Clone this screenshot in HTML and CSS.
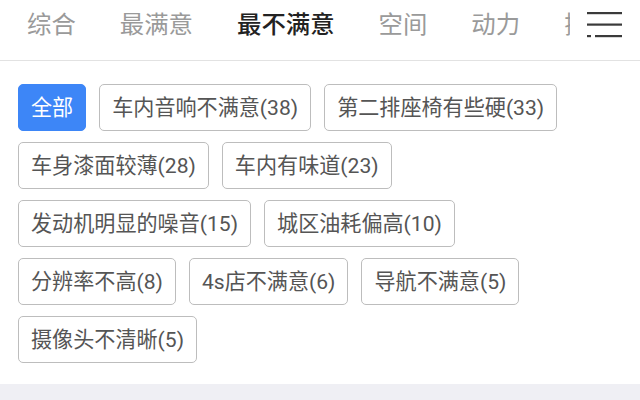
FILE: index.html
```html
<!DOCTYPE html>
<html lang="zh-CN">
<head>
    <meta charset="UTF-8">
    <meta name="viewport" content="width=device-width, initial-scale=1.0">
    <title>口碑标签</title>
    <link rel="stylesheet" href="styles.css">
</head>
<body>

    <div class="tabbar">
        <div class="tabs">
            <span class="tab">综合</span>
            <span class="tab">最满意</span>
            <span class="tab active">最不满意</span>
            <span class="tab">空间</span>
            <span class="tab">动力</span>
            <span class="tab">操控</span>
        </div>
        <div class="menu">
            <svg width="36" height="30" viewBox="0 0 36 30">
                <rect x="0" y="0" width="35" height="2.2" fill="#3a3a3a"/>
                <rect x="0" y="11.5" width="35" height="2.2" fill="#3a3a3a"/>
                <rect x="0" y="23" width="4" height="2.2" fill="#3a3a3a"/>
                <rect x="8" y="23" width="27" height="2.2" fill="#3a3a3a"/>
            </svg>
        </div>
    </div>

    <div class="tags">
        <span class="tag selected">全部</span>
        <span class="tag">车内音响不满意(38)</span>
        <span class="tag">第二排座椅有些硬(33)</span>
        <span class="tag">车身漆面较薄(28)</span>
        <span class="tag">车内有味道(23)</span>
        <span class="tag">发动机明显的噪音(15)</span>
        <span class="tag">城区油耗偏高(10)</span>
        <span class="tag">分辨率不高(8)</span>
        <span class="tag">4s店不满意(6)</span>
        <span class="tag">导航不满意(5)</span>
        <span class="tag">摄像头不清晰(5)</span>
    </div>

    <div class="footer-band"></div>

</body>
</html>
```

FILE: styles.css
```css
body {
    margin: 0;
    font-family: Roboto, "Noto Sans CJK SC", sans-serif;
    background-color: #fff;
}

.tabbar {
    display: flex;
    height: 60px;
    border-bottom: 1px solid #e2e2e2;
}

.tabs {
    flex: 1;
    display: flex;
    overflow: hidden;
    white-space: nowrap;
    padding-left: 5px;
}

.tab {
    position: relative;
    padding: 0 22px;
    font-size: 24.4px;
    line-height: 50px;
    color: #9a9a9a;
}

.tab.active {
    color: #222;
    font-weight: 500;
}

.tab.active::after {
    content: "";
    position: absolute;
    left: 50%;
    bottom: -10px;
    width: 36px;
    height: 3px;
    margin-left: -18px;
    background-color: #333;
}

.menu {
    width: 70px;
    display: flex;
    justify-content: flex-start;
    padding: 12px 0 0 17px;
    box-sizing: border-box;
    background-color: #fff;
}

.tags {
    display: flex;
    flex-wrap: wrap;
    gap: 11px 13px;
    padding: 23px 18px 23px;
    height: 300px;
    box-sizing: border-box;
    align-content: flex-start;
}

.tag {
    font-size: 21.1px;
    line-height: 45px;
    padding: 0 12px;
    color: #555;
    border: 1px solid #bdbdbd;
    border-radius: 5px;
}

.tag.selected {
    background-color: #3d86f7;
    border-color: #3d86f7;
    color: #fff;
}

.footer-band {
    height: 16px;
    background-color: #efeff4;
    margin-top: 23px;
}
```
